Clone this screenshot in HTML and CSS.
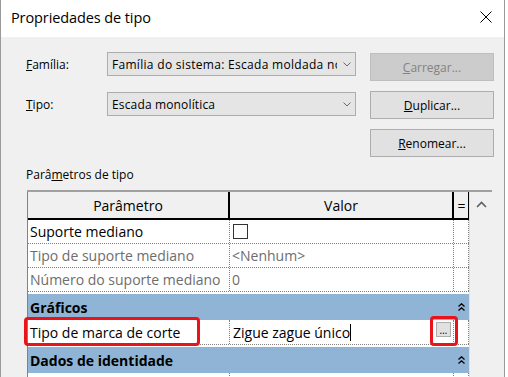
FILE: index.html
```html
<!DOCTYPE html>
<html lang="pt">
<head>
<meta charset="utf-8">
<title>Propriedades de tipo</title>
<link rel="stylesheet" href="styles.css">
</head>
<body>
<div class="dialog">
  <div class="titlebar">
    <span class="title">Propriedades de tipo</span>
    <svg class="close" width="12" height="12" viewBox="0 0 12 12"><path d="M0.5 0.5L11.5 11.5M11.5 0.5L0.5 11.5" stroke="#000" stroke-width="1" fill="none"/></svg>
  </div>
  <div class="body">
    <div class="top">
      <div class="fields">
        <span class="lbl"><u>F</u>amília:</span>
        <div class="combo"><span class="combo-text wide">Família do sistema: Escada moldada no local</span><svg class="chev" width="8" height="5" viewBox="0 0 8 5"><path d="M0.5 0.5L4 4L7.5 0.5" stroke="#6a6a6a" fill="none"/></svg></div>
        <span class="lbl"><u>T</u>ipo:</span>
        <div class="combo"><span class="combo-text">Escada monolítica</span><svg class="chev" width="8" height="5" viewBox="0 0 8 5"><path d="M0.5 0.5L4 4L7.5 0.5" stroke="#6a6a6a" fill="none"/></svg></div>
      </div>
      <div class="buttons">
        <div class="btn disabled"><u>C</u>arregar...</div>
        <div class="btn"><u>D</u>uplicar...</div>
        <div class="btn"><u>R</u>enomear...</div>
      </div>
    </div>
    <div class="section-label">Parâ<u>m</u>etros de tipo</div>
    <div class="grid">
      <div class="table">
        <div class="row head">
          <div class="cell">Parâmetro</div>
          <div class="cell">Valor</div>
          <div class="cell eq">=</div>
        </div>
        <div class="row">
          <div class="cell">Suporte mediano</div>
          <div class="cell"><span class="check"></span></div>
          <div class="cell"></div>
        </div>
        <div class="row dim">
          <div class="cell">Tipo de suporte mediano</div>
          <div class="cell">&lt;Nenhum&gt;</div>
          <div class="cell"></div>
        </div>
        <div class="row dim">
          <div class="cell">Número do suporte mediano</div>
          <div class="cell">0</div>
          <div class="cell"></div>
        </div>
        <div class="group">
          <span>Gráficos</span>
          <svg class="collapse" width="7" height="8" viewBox="0 0 7 8"><path d="M0.5 3.5L3.5 0.8L6.5 3.5M0.5 7.5L3.5 4.8L6.5 7.5" stroke="#000" stroke-width="1.3" fill="none"/></svg>
        </div>
        <div class="row active">
          <div class="cell">Tipo de marca de corte</div>
          <div class="cell"><span class="val">Zigue zague único</span><span class="caret"></span><span class="dots">…</span></div>
          <div class="cell"></div>
          <span class="mark mark-name"></span>
          <span class="mark mark-btn"></span>
        </div>
        <div class="group">
          <span>Dados de identidade</span>
          <svg class="collapse" width="7" height="8" viewBox="0 0 7 8"><path d="M0.5 3.5L3.5 0.8L6.5 3.5M0.5 7.5L3.5 4.8L6.5 7.5" stroke="#000" stroke-width="1.3" fill="none"/></svg>
        </div>
        <div class="row">
          <div class="cell"></div>
          <div class="cell"></div>
          <div class="cell"></div>
        </div>
      </div>
      <div class="scrollbar">
        <svg class="up" width="11" height="7" viewBox="0 0 11 7"><path d="M1 6L5.5 1.5L10 6" stroke="#606060" stroke-width="1.6" fill="none"/></svg>
      </div>
    </div>
  </div>
</div>
</body>
</html>
```
FILE: styles.css
```css
html, body {
  margin: 0;
  padding: 0;
  background: #ffffff;
}
body {
  font-family: "Open Sans", "Noto Sans", sans-serif;
  color: #000;
  overflow: hidden;
}
.dialog {
  width: 503px;
  height: 377px;
  border-left: 1px solid #9a9a9a;
  border-right: 1px solid #9a9a9a;
  background: #f0f0f0;
  overflow: hidden;
}
.titlebar {
  height: 37px;
  background: #fff;
  display: flex;
  align-items: center;
  justify-content: space-between;
  padding: 0 12px 0 10px;
}
.title {
  font-size: 14.5px;
  letter-spacing: -0.1px;
  margin-top: -2px;
}
.close {
  display: block;
  margin-top: -3px;
}
.body {
  padding: 0 0 0 25px;
}
.top {
  display: flex;
  padding-top: 15px;
  height: 105px;
  box-sizing: content-box;
}
.fields {
  display: grid;
  grid-template-columns: 81px 249px;
  grid-auto-rows: 24px;
  row-gap: 16px;
  align-items: center;
}
.lbl {
  font-size: 12px;
}
.combo {
  height: 24px;
  box-sizing: border-box;
  border: 1px solid #adadad;
  background: #e5e5e5;
  display: flex;
  align-items: center;
  padding: 0 0 0 4px;
  font-size: 12px;
  position: relative;
}
.combo-text {
  white-space: nowrap;
  overflow: hidden;
  width: 225px;
  color: #000;
  letter-spacing: 0.15px;
}
.combo-text.wide {
  letter-spacing: 0.3px;
}
.chev {
  margin-left: 6px;
  display: block;
}
.buttons {
  margin-left: 14px;
  padding-top: 1px;
  display: flex;
  flex-direction: column;
  gap: 10px;
}
.btn {
  width: 124px;
  height: 28px;
  box-sizing: border-box;
  border: 1px solid #adadad;
  background: #e1e1e1;
  font-size: 12px;
  display: flex;
  align-items: center;
  justify-content: center;
}
.btn.disabled {
  background: #cccccc;
  border-color: #bfbfbf;
  color: #838383;
}
.section-label {
  font-size: 12px;
  margin-top: 9px;
  height: 17px;
}
.grid {
  margin-top: 7px;
  margin-left: 1px;
  width: 465px;
  display: flex;
  border-top: 2px solid #a0a0a0;
}
.table {
  width: 442px;
  box-sizing: border-box;
  border-left: 1px solid #828282;
  background: #fff;
  font-size: 14px;
}
.row {
  display: grid;
  grid-template-columns: 202px 224px 15px;
  height: 24px;
  box-sizing: border-box;
  border-bottom: 1px dotted #808080;
  position: relative;
}
.cell {
  border-right: 1px dotted #808080;
  display: flex;
  align-items: center;
  padding-left: 2px;
  white-space: nowrap;
  overflow: hidden;
}
.row.head {
  height: 28px;
  background: #f0f0f0;
  border-bottom: 2px solid #000;
}
.row.head .cell {
  border-right: 2px solid #000;
  justify-content: center;
  padding: 0;
}
.row.head .cell.eq {
  border-right-width: 1px;
  padding-left: 1px;
}
.row.dim .cell {
  color: #6d6d6d;
}
.check {
  width: 15px;
  height: 15px;
  box-sizing: border-box;
  border: 1px solid #333;
  background: #fff;
  margin-left: 1px;
}
.group {
  height: 26px;
  background: #8fb4d5;
  display: flex;
  align-items: center;
  justify-content: space-between;
  font-weight: bold;
  padding: 0 4px 0 2px;
  border-top: 2px solid #fff;
  box-sizing: content-box;
}
.collapse {
  display: block;
}
.row.active {
  height: 25px;
}
.val {
  margin-left: 1px;
}
.caret {
  width: 1px;
  height: 17px;
  background: #000;
  margin-left: 0;
}
.dots {
  margin-left: auto;
  margin-right: 2px;
  align-self: flex-start;
  margin-top: 2px;
  width: 15px;
  height: 15px;
  box-sizing: border-box;
  border: 1px solid #adadad;
  background: #e1e1e1;
  font-size: 10px;
  display: flex;
  align-items: center;
  justify-content: center;
  line-height: 1;
}
.mark {
  position: absolute;
  border: 3px solid #e8131b;
  border-radius: 4px;
  box-sizing: border-box;
}
.mark-name {
  left: -4px;
  top: -3px;
  width: 176px;
  height: 29px;
}
.mark-btn {
  left: 402px;
  top: -4px;
  width: 28px;
  height: 30px;
}
.scrollbar {
  width: 23px;
  background: #f0f0f0;
  border-left: 1px solid #e0e0e0;
  box-sizing: border-box;
  display: flex;
  justify-content: center;
  padding-top: 9px;
  align-items: flex-start;
}
.up {
  display: block;
}
```
